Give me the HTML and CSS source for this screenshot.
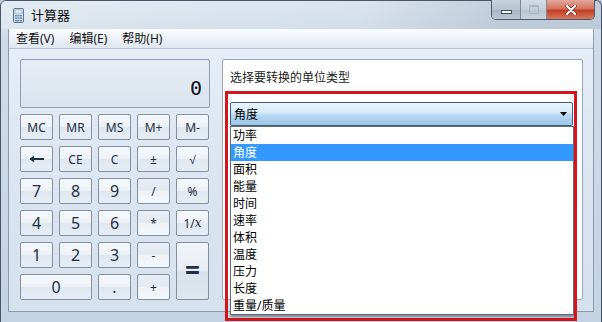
FILE: index.html
```html
<!DOCTYPE html>
<html lang="zh-CN">
<head>
  <meta charset="UTF-8" />
  <title>计算器</title>
  <link rel="stylesheet" href="styles.css">
</head>
<body>

<div class="window">
  <div class="titlebar">
    <svg class="app-icon" viewBox="0 0 11 15" width="11" height="15">
      <rect x="0.5" y="0.5" width="10" height="14" rx="1" fill="#cfe0ef" stroke="#5b7796" />
      <rect x="2" y="2" width="7" height="3" fill="#f4f9fd" stroke="#7d97b3" stroke-width="0.6" />
      <rect x="2" y="7" width="2" height="1.4" fill="#6a86a5" />
      <rect x="4.5" y="7" width="2" height="1.4" fill="#6a86a5" />
      <rect x="7" y="7" width="2" height="1.4" fill="#6a86a5" />
      <rect x="2" y="9.5" width="2" height="1.4" fill="#6a86a5" />
      <rect x="4.5" y="9.5" width="2" height="1.4" fill="#6a86a5" />
      <rect x="7" y="9.5" width="2" height="1.4" fill="#6a86a5" />
      <rect x="2" y="12" width="4.5" height="1.4" fill="#6a86a5" />
      <rect x="7" y="12" width="2" height="1.4" fill="#6a86a5" />
    </svg>
    <span class="title">计算器</span>
    <div class="caption-buttons">
      <span class="cap cap-min"><i></i></span>
      <span class="cap cap-max"><i></i></span>
      <span class="cap cap-close">
        <svg viewBox="0 0 12 10" width="12" height="10">
          <path d="M2,1 L10,9 M10,1 L2,9" stroke="#6b2a22" stroke-width="3.4" stroke-linecap="round" />
          <path d="M2,1 L10,9 M10,1 L2,9" stroke="#ffffff" stroke-width="2.2" stroke-linecap="round" />
        </svg>
      </span>
    </div>
  </div>

  <div class="client">
    <div class="menubar">
      <span>查看(V)</span>
      <span>编辑(E)</span>
      <span>帮助(H)</span>
    </div>

    <div class="main">
      <div class="calc">
        <div class="display">0</div>
        <div class="keys">
          <button class="key small">MC</button>
          <button class="key small">MR</button>
          <button class="key small">MS</button>
          <button class="key small">M+</button>
          <button class="key small">M-</button>

          <button class="key">
            <svg viewBox="0 0 16 8" width="16" height="8">
              <path d="M1,4 L15,4" stroke="#1e2e45" stroke-width="2" />
              <path d="M0.5,4 L5,0.5 L5,7.5 Z" fill="#1e2e45" />
            </svg>
          </button>
          <button class="key small">CE</button>
          <button class="key small">C</button>
          <button class="key small">±</button>
          <button class="key small">√</button>

          <button class="key digit">7</button>
          <button class="key digit">8</button>
          <button class="key digit">9</button>
          <button class="key op small">/</button>
          <button class="key small">%</button>

          <button class="key digit">4</button>
          <button class="key digit">5</button>
          <button class="key digit">6</button>
          <button class="key op small">*</button>
          <button class="key small">1/<em>x</em></button>

          <button class="key digit">1</button>
          <button class="key digit">2</button>
          <button class="key digit">3</button>
          <button class="key op small">-</button>
          <button class="key equals">=</button>

          <button class="key digit zero">0</button>
          <button class="key digit">.</button>
          <button class="key op small">+</button>
        </div>
      </div>

      <div class="converter">
        <p class="conv-label">选择要转换的单位类型</p>
        <div class="combo">
          <span>角度</span>
          <svg viewBox="0 0 7 4" width="7" height="4"><path d="M0,0 L7,0 L3.5,4 Z" fill="#000" /></svg>
        </div>
        <ul class="droplist">
          <li>功率</li>
          <li class="selected">角度</li>
          <li>面积</li>
          <li>能量</li>
          <li>时间</li>
          <li>速率</li>
          <li>体积</li>
          <li>温度</li>
          <li>压力</li>
          <li>长度</li>
          <li>重量/质量</li>
        </ul>
        <div class="mark"></div>
      </div>
    </div>
  </div>
</div>

</body>
</html>
```

FILE: styles.css
```css
html, body {
  margin: 0;
  padding: 0;
}
body {
  width: 602px;
  height: 322px;
  overflow: hidden;
  font-family: 'Noto Sans', 'Noto Sans CJK SC', sans-serif;
  font-size: 12px;
  background: #b9c9db;
}
.window {
  width: 602px;
  height: 322px;
  box-sizing: border-box;
  border: 1px solid #47566a;
  border-bottom: none;
  border-radius: 6px 6px 0 0;
  background: linear-gradient(180deg, #dbe4ee 0%, #cfdbe8 12%, #c4d3e4 100%);
  display: flex;
  flex-direction: column;
}
.titlebar {
  height: 28px;
  display: flex;
  align-items: flex-start;
  background: linear-gradient(90deg, rgba(255,255,255,0.25), rgba(255,255,255,0) 60%, rgba(120,140,165,0.25) 85%);
}
.app-icon {
  margin: 7px 0 0 12px;
}
.title {
  margin: 5px 0 0 7px;
  font-size: 13px;
  line-height: 18px;
  color: #111;
}
.caption-buttons {
  margin-left: auto;
  margin-right: 6px;
  margin-top: -1px;
  display: flex;
  height: 19px;
  border: 1px solid #4b5a6d;
  border-top: none;
  border-radius: 0 0 5px 5px;
  overflow: hidden;
}
.cap {
  display: flex;
  align-items: center;
  justify-content: center;
  height: 19px;
}
.cap-min {
  width: 28px;
  border-right: 1px solid #7a8899;
  background: linear-gradient(180deg, #c9d3de 0%, #b7c3d1 50%, #a6b4c5 51%, #bac8d7 100%);
}
.cap-min i {
  display: block;
  width: 9px;
  height: 2px;
  margin-top: 4px;
  background: #fff;
  border: 1px solid #3d4b5c;
}
.cap-max {
  width: 25px;
  border-right: 1px solid #7a8899;
  background: linear-gradient(180deg, #d3dbe4 0%, #c3ced9 50%, #b7c3d0 51%, #c8d3de 100%);
}
.cap-max i {
  display: block;
  width: 8px;
  height: 6px;
  border: 1px solid #aab6c3;
  border-top-width: 2px;
}
.cap-close {
  width: 47px;
  background: linear-gradient(180deg, #e3a89c 0%, #d5735f 45%, #c23f26 55%, #d8775c 100%);
}
.client {
  flex: 1;
  margin: 0 7px 10px 7px;
  border: 1px solid #8a9ab0;
  border-top: none;
  background: linear-gradient(180deg, #e9eff7 0%, #dde6f1 40%, #d6e1ee 100%);
  display: flex;
  flex-direction: column;
}
.menubar {
  height: 19px;
  border-bottom: 1px solid #b5c2d2;
  background: linear-gradient(180deg, #fbfcfe 0%, #eef2f8 50%, #dfe6ef 100%);
  display: flex;
  align-items: center;
  gap: 15px;
  padding-left: 7px;
  color: #111;
}
.menubar span {
  line-height: 16px;
}
.main {
  flex: 1;
  display: flex;
  gap: 12px;
  padding: 10px 0 0 11px;
}
.calc {
  width: 190px;
  display: flex;
  flex-direction: column;
  gap: 6px;
}
.display {
  height: 47px;
  border: 1px solid #8f9eb2;
  border-radius: 2px;
  background: linear-gradient(180deg, #e5ecf4, #dae3ee);
  text-align: right;
  padding: 0 7px;
  font-family: 'DejaVu Sans Mono', monospace;
  font-size: 20px;
  line-height: 56px;
  color: #111;
}
.keys {
  display: grid;
  grid-template-columns: repeat(5, 33px);
  grid-auto-rows: 26px;
  gap: 6px;
}
.key {
  margin: 0;
  padding: 0;
  box-sizing: border-box;
  border: 1px solid #8390a2;
  border-radius: 2px;
  background: linear-gradient(180deg, #f6f8fb 0%, #edf1f6 48%, #e0e7ef 52%, #e6ecf3 100%);
  color: #1e2e45;
  font-family: 'Noto Sans', sans-serif;
  font-size: 12px;
  display: flex;
  align-items: center;
  justify-content: center;
}
.key.digit {
  font-size: 16px;
}
.key em {
  font-family: 'DejaVu Serif', serif;
  font-style: italic;
}
.key.op {
  background: linear-gradient(180deg, #e9eef4 0%, #e3e9f0 48%, #eef2f7 52%, #f3f6fa 100%);
}
.key.equals {
  grid-row: span 2;
  font-size: 26px;
  font-weight: bold;
  padding-bottom: 3px;
  background: linear-gradient(180deg, #f1f4f8 0%, #e9eef4 48%, #d9e1ea 52%, #dfe6ee 100%);
}
.key.zero {
  grid-column: span 2;
}
.converter {
  width: 361px;
  height: 241px;
  box-sizing: border-box;
  border: 1px solid #97a6b9;
  border-radius: 2px;
  background: #fff;
  position: relative;
  padding: 0 7px;
}
.conv-label {
  margin: 9px 0 0 0;
  line-height: 17px;
  color: #222;
}
.combo {
  margin-top: 16px;
  width: 343px;
  height: 24px;
  box-sizing: border-box;
  border: 1px solid #3e5f80;
  border-radius: 2px;
  background: linear-gradient(180deg, #eaf4fc 0%, #d5e9f8 45%, #b7d8f1 55%, #9ec6e6 100%);
  display: flex;
  align-items: center;
  justify-content: space-between;
  padding: 0 5px 0 3px;
  color: #000;
}
.droplist {
  position: absolute;
  left: 7px;
  top: 66px;
  width: 344px;
  box-sizing: border-box;
  margin: 0;
  padding: 0;
  list-style: none;
  background: #fff;
  border: 1px solid #646b74;
  box-shadow: 1px 2px 2px rgba(0,0,0,0.35);
}
.droplist li {
  height: 17px;
  line-height: 17px;
  padding-left: 2px;
  color: #000;
}
.droplist li.selected {
  background: #3399ff;
  color: #fff;
}
.mark {
  position: absolute;
  left: 2px;
  top: 31px;
  width: 352px;
  height: 230px;
  box-sizing: border-box;
  border: 3px solid #d4161c;
  pointer-events: none;
}
```
